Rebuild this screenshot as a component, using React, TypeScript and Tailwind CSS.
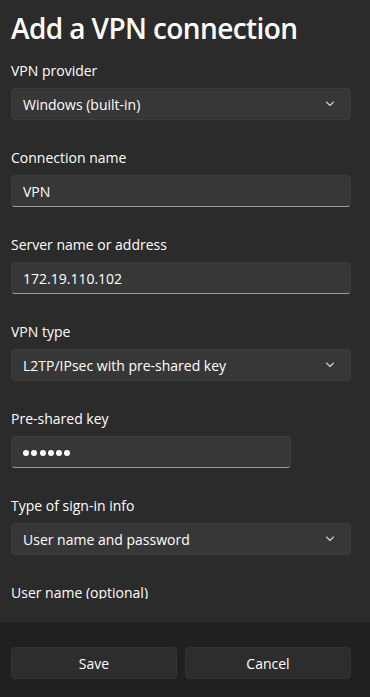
import React from 'react';

const font = { fontFamily: '"Open Sans", "Noto Sans", sans-serif' };

function Chevron() {
  return (
    <svg width="10" height="6" viewBox="0 0 10 6" fill="none">
      <path d="M1.5 1 L5 4.5 L8.5 1" stroke="#d0d0d0" strokeWidth="1.1" strokeLinecap="round" strokeLinejoin="round" />
    </svg>
  );
}

function Label({ children }: { children: React.ReactNode }) {
  return <div className="h-5 text-[14px] leading-5 text-white mb-[7px]">{children}</div>;
}

function Select({ value }: { value: string }) {
  return (
    <div className="h-8 rounded-[4px] bg-[#373737] border border-[#3c3c3c] flex items-center justify-between pl-[11px] pr-[15px] text-[14px] text-white">
      <span>{value}</span>
      <Chevron />
    </div>
  );
}

function TextBox({ children, className = '' }: { children: React.ReactNode; className?: string }) {
  return (
    <div className={`h-8 rounded-[4px] bg-[#373737] border border-[#3c3c3c] border-b-[#9b9b9b] flex items-center pl-[11px] text-[14px] text-white ${className}`}>
      {children}
    </div>
  );
}

export default function App() {
  return (
    <div style={font} className="w-[370px] h-[697px] flex flex-col bg-[#2b2b2b] overflow-hidden">
      <div className="flex-1 min-h-0 pb-[23px] flex flex-col">
        <div className="flex-1 min-h-0 overflow-hidden pl-[11px] pr-[19px] pt-[10px]">
          <h1 className="text-[28px] leading-9 font-semibold text-white tracking-[-0.6px] mb-[15px]">Add a VPN connection</h1>

          <div className="mb-7">
            <Label>VPN provider</Label>
            <Select value="Windows (built-in)" />
          </div>

          <div className="mb-7">
            <Label>Connection name</Label>
            <TextBox>VPN</TextBox>
          </div>

          <div className="mb-7">
            <Label>Server name or address</Label>
            <TextBox>172.19.110.102</TextBox>
          </div>

          <div className="mb-7">
            <Label>VPN type</Label>
            <Select value="L2TP/IPsec with pre-shared key" />
          </div>

          <div className="mb-7">
            <Label>Pre-shared key</Label>
            <TextBox className="w-[280px]">
              <span aria-label="password" className="flex gap-[2.3px] mt-[2px]">
                {[0, 1, 2, 3, 4, 5].map((i) => (
                  <span key={i} className="w-[6px] h-[6px] rounded-full bg-white" />
                ))}
              </span>
            </TextBox>
          </div>

          <div className="mb-7">
            <Label>Type of sign-in info</Label>
            <Select value="User name and password" />
          </div>

          <div>
            <Label>User name (optional)</Label>
            <TextBox>{''}</TextBox>
          </div>
        </div>
      </div>

      <footer className="h-[75px] shrink-0 bg-[#202020] pl-[11px] pr-[19px] pt-[25px] flex gap-2">
        <button className="flex-1 h-8 rounded-[4px] bg-[#2d2d2d] border border-[#353535] text-[14px] text-white">Save</button>
        <button className="flex-1 h-8 rounded-[4px] bg-[#2d2d2d] border border-[#353535] text-[14px] text-white">Cancel</button>
      </footer>
    </div>
  );
}
